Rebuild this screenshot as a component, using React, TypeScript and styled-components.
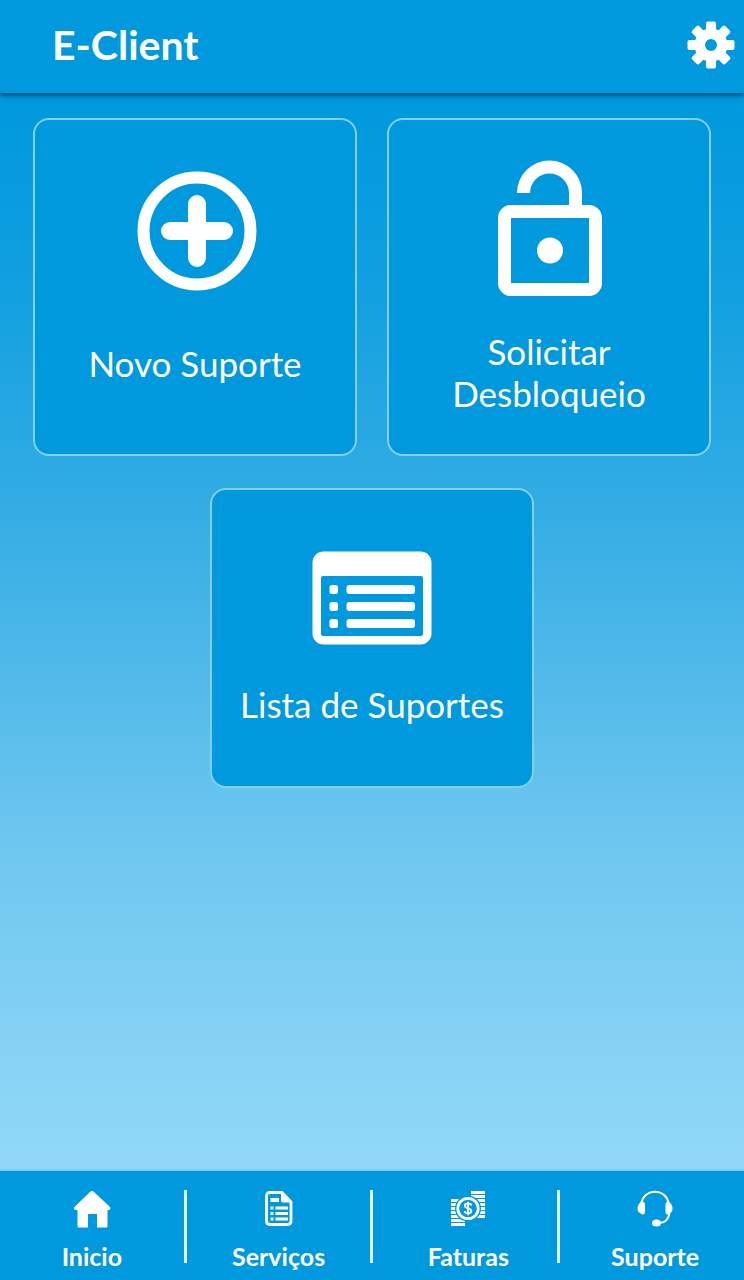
import React from 'react';
import styled, { createGlobalStyle } from 'styled-components';

const blue = '#0099dd';

const GlobalStyle = createGlobalStyle`
  * { box-sizing: border-box; }
  body {
    margin: 0;
    font-family: Lato, 'Open Sans', sans-serif;
    color: #fff;
    background: ${blue};
  }
`;

const Page = styled.div`
  min-height: 100vh;
  display: flex;
  flex-direction: column;
  background: linear-gradient(#0099dd 8%, #0f9fe0 21%, #34ade4 40%, #6cc6ef 65%, #86d2f5 82%, #93d9f9 92%);
`;

const Header = styled.header`
  height: 93px;
  display: flex;
  align-items: center;
  justify-content: space-between;
  padding: 0 9px 4px 52px;
  background: ${blue};
  box-shadow: 0 2px 5px rgba(0, 30, 60, 0.75);
`;

const Title = styled.h1`
  margin: 0;
  font-size: 41px;
  line-height: 48px;
  font-weight: 700;
`;

const IconButton = styled.button`
  display: flex;
  padding: 0;
  border: 0;
  background: none;
  color: inherit;
  cursor: pointer;
`;

const Main = styled.main`
  flex: 1;
  display: flex;
  flex-direction: column;
  align-items: center;
  gap: 32px;
  padding: 25px 33px;
`;

const CardRow = styled.div`
  width: 100%;
  display: flex;
  justify-content: center;
  gap: 30px;
`;

const Card = styled.button<{ $height: number; $top: number; $gap: number }>`
  width: calc(50% - 15px);
  min-height: ${(p) => p.$height}px;
  display: flex;
  flex-direction: column;
  align-items: center;
  justify-content: flex-start;
  gap: ${(p) => p.$gap}px;
  padding: ${(p) => p.$top}px 20px 0;
  border: 2px solid #85d0f2;
  border-radius: 16px;
  background: ${blue};
  color: inherit;
  font: inherit;
  cursor: pointer;
`;

const CardLabel = styled.span<{ $lines?: number }>`
  max-width: ${(p) => (p.$lines === 2 ? '220px' : 'none')};
  font-size: 35px;
  line-height: 42px;
`;

const Nav = styled.nav`
  display: flex;
  height: 111px;
  padding-top: 19px;
  border-top: 2px solid #74d2f2;
  background: ${blue};
`;

const NavDivider = styled.span`
  flex: none;
  width: 3px;
  height: 73px;
  background: #e2f7ff;
`;

const NavLink = styled.a`
  flex: 1 1 25%;
  display: flex;
  flex-direction: column;
  align-items: center;
  gap: 13px;
  color: inherit;
  text-decoration: none;
  font-size: 25px;
  line-height: 30px;
  font-weight: 700;

  &:nth-of-type(n + 3) {
    padding-left: 6px;
  }
`;

const GearIcon = () => (
  <svg width="48" height="48" viewBox="0 0 48 48" aria-hidden="true" fill="#fff">
    {[0, 45, 90, 135].map((angle) => (
      <rect key={angle} x="19" y="0.5" width="10" height="47" rx="2" transform={`rotate(${angle} 24 24)`} />
    ))}
    <circle cx="24" cy="24" r="16.5" />
    <circle cx="24" cy="24" r="6" fill={blue} />
  </svg>
);

const PlusIcon = () => (
  <svg width="124" height="120" viewBox="-4 0 124 120" aria-hidden="true" fill="none" stroke="#fff">
    <circle cx="60" cy="60" r="53.5" strokeWidth="12" />
    <path d="M33 60H87M60 33V87" strokeWidth="18" strokeLinecap="round" />
  </svg>
);

const UnlockIcon = () => (
  <svg width="106" height="136" viewBox="-2 0 106 136" aria-hidden="true" fill="#fff">
    <path d="M19 33A32.5 32.5 0 0 1 84 33V50H71V33A19.500 19.500 0 0 0 32 33Z" />
    <path
      fillRule="evenodd"
      d="M13 45H91A13 13 0 0 1 104 58V123A13 13 0 0 1 91 136H13A13 13 0 0 1 0 123V58A13 13 0 0 1 13 45ZM13 58V123H91V58Z"
    />
    <circle cx="52" cy="90.5" r="13" />
  </svg>
);

const ListIcon = () => (
  <svg width="120" height="94" viewBox="0 0 120 94" aria-hidden="true" fill="#fff">
    <rect x="0.5" y="0.5" width="119" height="93" rx="11" />
    <rect x="9" y="25" width="102" height="60" rx="2" fill={blue} />
    {[34, 51, 68].map((y) => (
      <g key={y}>
        <rect x="17.5" y={y} width="8.5" height="9" rx="2.5" />
        <rect x="34.5" y={y} width="68.5" height="9" rx="3" />
      </g>
    ))}
  </svg>
);

const HomeIcon = () => (
  <svg width="38" height="38" viewBox="0 0 38 38" aria-hidden="true" fill="#fff">
    <path d="M17 2Q19 0 21 2L37 17Q38 18.500 36.500 20H34.500V36Q34.500 37.500 33 37.500H24V24H15V37.500H6Q4.500 37.500 4.500 36V20H2Q0 18.500 1.500 17Z" />
  </svg>
);

const DocumentIcon = () => (
  <svg width="38" height="38" viewBox="0 0 38 38" aria-hidden="true">
    <path
      d="M10 2.500H22L31 12V31Q31 34.500 27.500 34.500H10Q6.500 34.500 6.500 31V6Q6.500 2.500 10 2.500Z"
      fill="none"
      stroke="#fff"
      strokeWidth="2.800"
    />
    <path d="M21 1L32.500 12.500H23Q21 12.500 21 10.500Z" fill="#fff" />
    <path
      d="M10.500 8H19V12H10.500ZM10.500 16.500H13.500V19.500H10.500ZM15.500 16.500H28V19.500H15.500ZM10.500 22H13.500V25H10.500ZM15.500 22H28V25H15.500ZM10.500 27.500H13.500V30.500H10.500ZM15.500 27.500H28V30.500H15.500Z"
      fill="#fff"
    />
  </svg>
);

const CoinsIcon = () => (
  <svg width="38" height="38" viewBox="0 0 38 38" aria-hidden="true">
    <path
      d="M22 2.500H36M22 6.500H36M25 10.500H36M25 14.500H36M25 18.500H36M25 22.500H36M25 26.500H36M2 10.500H14M2 14.500H12M2 18.500H12M2 22.500H12M2 26.500H12M2 30.500H16M2 34.500H16"
      stroke="#fff"
      strokeWidth="2.800"
    />
    <circle cx="19" cy="18.5" r="13" fill={blue} />
    <circle cx="19" cy="18.5" r="10.2" fill="none" stroke="#fff" strokeWidth="2.800" />
    <path
      d="M22.300 15.500C21.800 12.800 15.800 12.800 15.800 15.800C15.800 18.800 22.300 17.600 22.300 21C22.300 24.200 15.900 24.200 15.600 21M19 11.800V25.200"
      fill="none"
      stroke="#fff"
      strokeWidth="1.800"
    />
  </svg>
);

const HeadsetIcon = () => (
  <svg width="38" height="38" viewBox="0 0 38 38" aria-hidden="true" fill="none" stroke="#fff">
    <path d="M5 16C6 -3 32 -3 33 16" strokeWidth="2.200" />
    <path d="M33.500 22C33 29 29.500 33 22 33" strokeWidth="2" />
    <path
      d="M5 12H7Q9 12 9 15V21Q9 24.500 7 24.500Q1.500 23 1.500 18.500Q1.500 14 5 12ZM33 12H31Q29.500 12 29.500 15V21Q29.500 24.500 31.500 24.500Q36.500 23 36.500 18.500Q36.500 14 33 12Z"
      fill="#fff"
      stroke="none"
    />
    <ellipse cx="20.5" cy="33" rx="4.5" ry="3.5" fill="#fff" stroke="none" />
  </svg>
);

const navItems = [
  { label: 'Inicio', Icon: HomeIcon },
  { label: 'Serviços', Icon: DocumentIcon },
  { label: 'Faturas', Icon: CoinsIcon },
  { label: 'Suporte', Icon: HeadsetIcon },
];

export default function App() {
  return (
    <>
      <GlobalStyle />
      <Page>
        <Header>
          <Title>E-Client</Title>
          <IconButton type="button" aria-label="Configurações">
            <GearIcon />
          </IconButton>
        </Header>
        <Main>
          <CardRow>
            <Card type="button" $height={338} $top={51} $gap={51}>
              <PlusIcon />
              <CardLabel>Novo Suporte</CardLabel>
            </Card>
            <Card type="button" $height={338} $top={40} $gap={34}>
              <UnlockIcon />
              <CardLabel $lines={2}>Solicitar Desbloqueio</CardLabel>
            </Card>
          </CardRow>
          <CardRow>
            <Card type="button" $height={300} $top={61} $gap={38}>
              <ListIcon />
              <CardLabel>Lista de Suportes</CardLabel>
            </Card>
          </CardRow>
        </Main>
        <Nav aria-label="Principal">
          {navItems.map(({ label, Icon }, index) => (
            <React.Fragment key={label}>
              {index > 0 && <NavDivider />}
              <NavLink href="#">
                <Icon />
                {label}
              </NavLink>
            </React.Fragment>
          ))}
        </Nav>
      </Page>
    </>
  );
}
